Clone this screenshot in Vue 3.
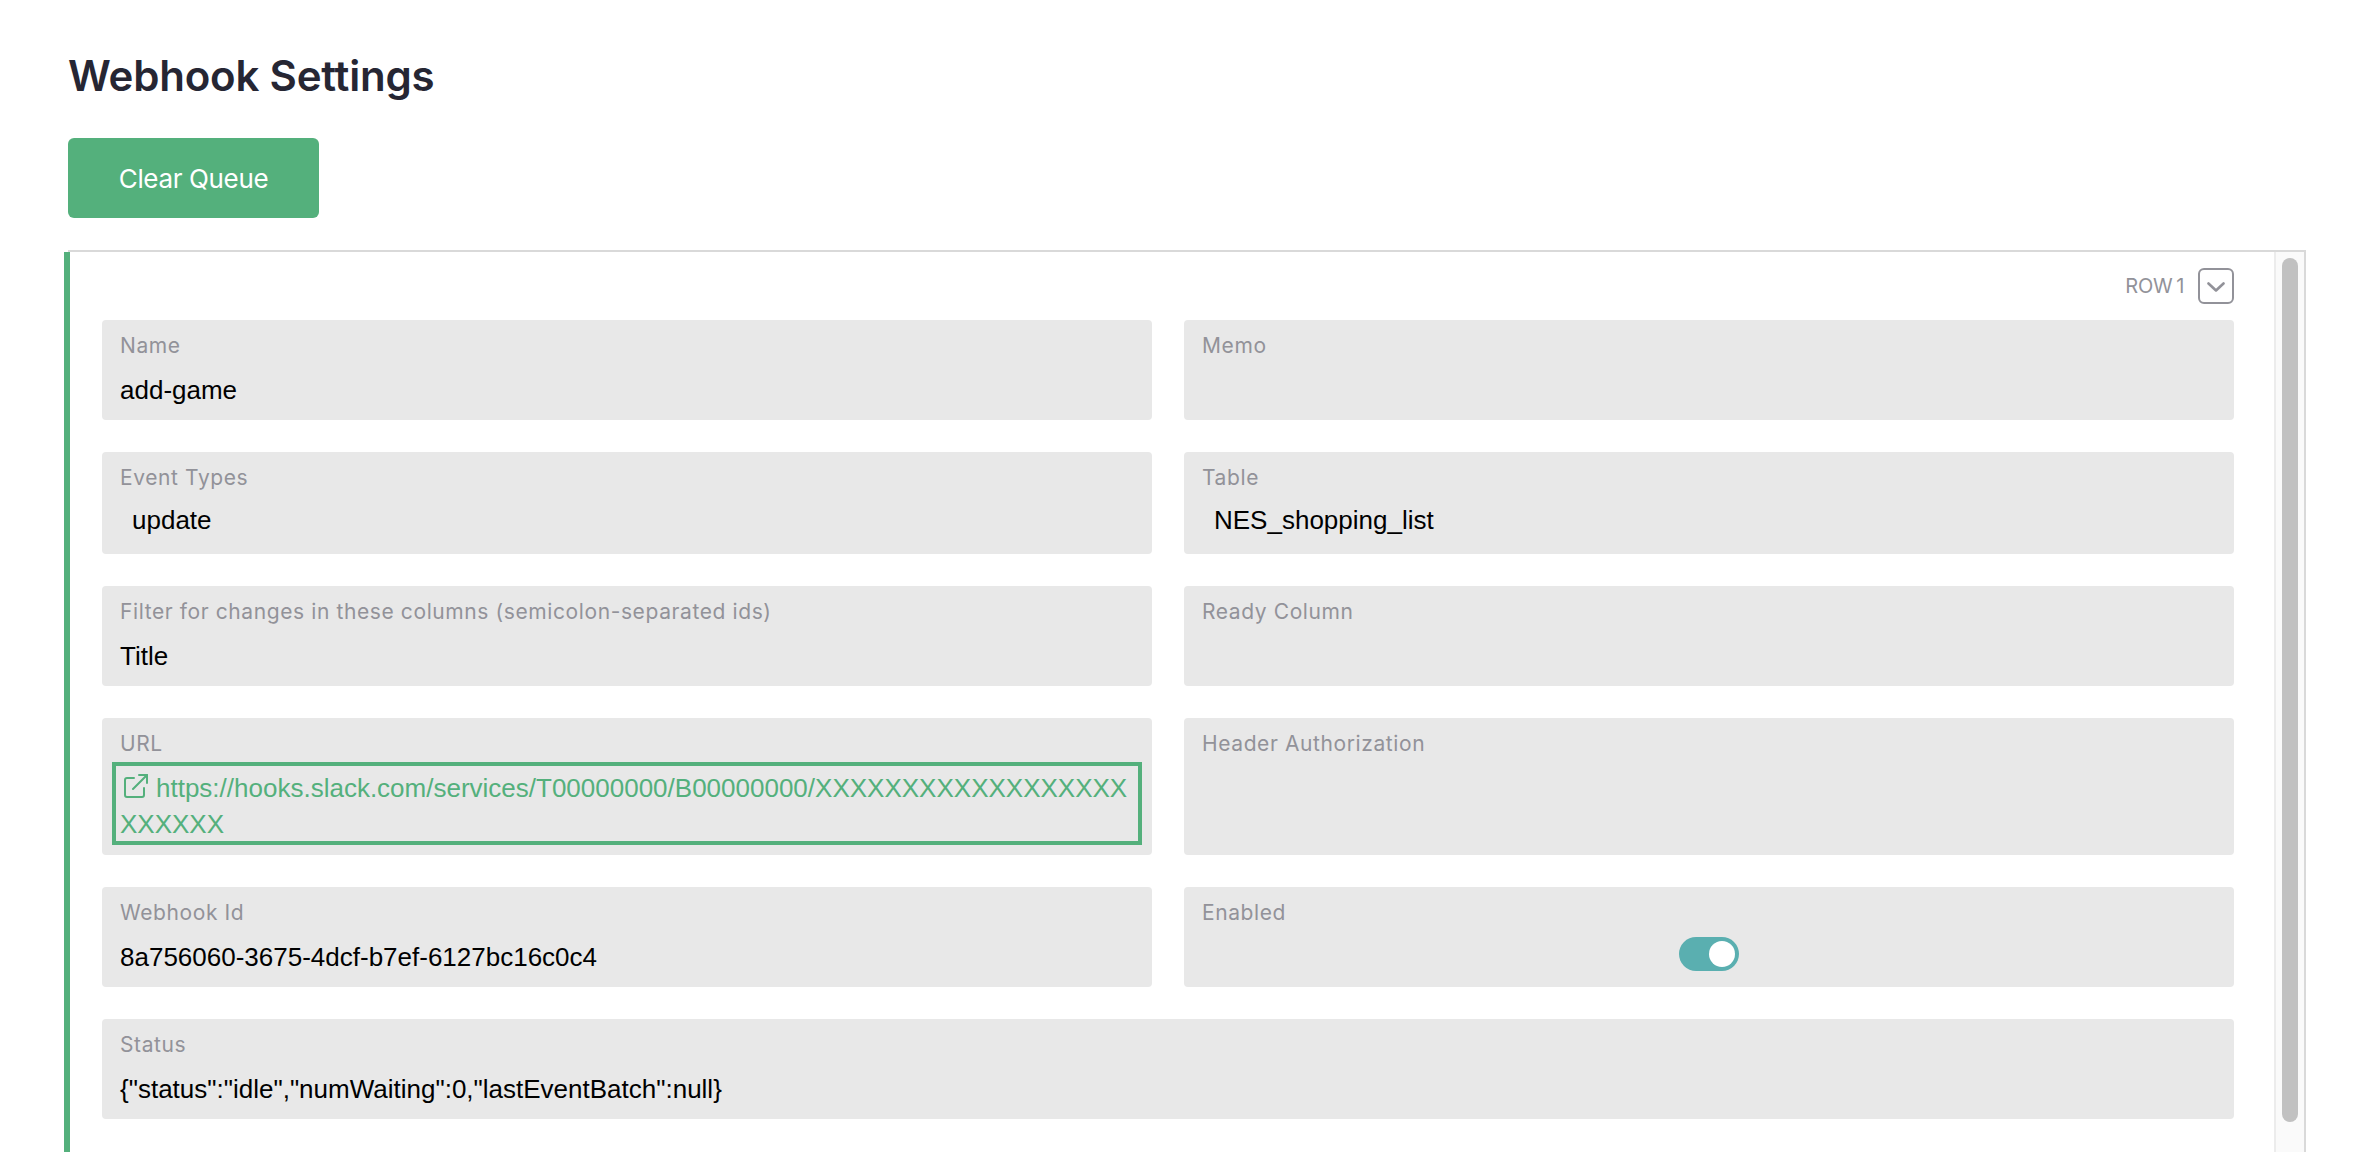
<script setup>
const rows = [
  [{ label: 'Name', value: 'add-game' }, { label: 'Memo', value: '' }],
  [{ label: 'Event Types', value: 'update', select: true }, { label: 'Table', value: 'NES_shopping_list', select: true }],
  [{ label: 'Filter for changes in these columns (semicolon-separated ids)', value: 'Title' }, { label: 'Ready Column', value: '' }],
]
</script>

<template>
  <div class="page">
    <h1 class="title">Webhook Settings</h1>
    <button class="clear">Clear Queue</button>
    <section class="card">
      <div class="body">
        <div class="content">
          <div class="rowhead">
            <span class="rowlabel">ROW 1</span>
            <span class="rowbtn">
              <svg width="20" height="12" viewBox="0 0 20 12"><path d="M2.5 3.5 10 10.5l7.5-7" fill="none" stroke="#929299" stroke-width="2.6" stroke-linecap="round" stroke-linejoin="round"/></svg>
            </span>
          </div>
          <div class="grid">
            <template v-for="(row, i) in rows" :key="i">
              <div v-for="f in row" :key="f.label" class="field" :class="{ tall: f.select }">
                <div class="label">{{ f.label }}</div>
                <div class="value" :class="{ select: f.select }">{{ f.value }}</div>
              </div>
            </template>
            <div class="field url">
              <div class="label">URL</div>
              <div class="urlbox">
                <svg class="ext" width="24" height="24" viewBox="0 0 24 24" fill="none" stroke="#54b07c" stroke-width="2" stroke-linecap="round" stroke-linejoin="round"><path d="M10 4H3a2 2 0 0 0-2 2v15a2 2 0 0 0 2 2h15a2 2 0 0 0 2-2v-7"/><path d="M9 15 23 1"/><path d="M15 1h8v8"/></svg>https://hooks.slack.com/services/T00000000/B00000000/XXXXXXXXXXXXXXXXXXXXXXXX
              </div>
            </div>
            <div class="field url">
              <div class="label">Header Authorization</div>
            </div>
            <div class="field">
              <div class="label">Webhook Id</div>
              <div class="value">8a756060-3675-4dcf-b7ef-6127bc16c0c4</div>
            </div>
            <div class="field">
              <div class="label">Enabled</div>
              <div class="toggle-wrap"><span class="toggle"><span class="knob"></span></span></div>
            </div>
            <div class="field wide">
              <div class="label">Status</div>
              <div class="value">{"status":"idle","numWaiting":0,"lastEventBatch":null}</div>
            </div>
          </div>
        </div>
        <div class="track"><div class="thumb"></div></div>
      </div>
    </section>
  </div>
</template>

<style scoped>
.page {
  width: 2362px;
  height: 1152px;
  box-sizing: border-box;
  padding: 48px 56px 0 64px;
  overflow: hidden;
  background: #fff;
  font-family: Inter, "Liberation Sans", sans-serif;
}
.title {
  margin: 0 0 0 4px;
  height: 56px;
  line-height: 56px;
  font-size: 42px;
  font-weight: 600;
  letter-spacing: -0.2px;
  color: #262633;
}
.clear {
  display: block;
  margin: 34px 0 0 4px;
  width: 251px;
  height: 80px;
  border: none;
  border-radius: 6px;
  background: #54b07c;
  color: #fff;
  font-family: inherit;
  font-size: 26px;
  letter-spacing: -0.35px;
}
.card {
  margin: 32px 0 0 4px;
  height: 902px;
  box-sizing: border-box;
  border-top: 2px solid #d9d9d9;
  border-right: 2px solid #d9d9d9;
}
.body {
  display: flex;
  height: 100%;
  margin-left: -4px;
  border-left: 6px solid #54b07c;
}
.content {
  flex: 1;
  min-width: 0;
  padding: 16px 40px 0 32px;
}
.rowhead {
  display: flex;
  justify-content: flex-end;
  align-items: center;
  gap: 14px;
  height: 36px;
}
.rowlabel {
  font-size: 20px;
  letter-spacing: -0.3px;
  word-spacing: -1.5px;
  color: #929299;
}
.rowbtn {
  display: flex;
  align-items: center;
  justify-content: center;
  width: 36px;
  height: 36px;
  box-sizing: border-box;
  border: 2px solid #929299;
  border-radius: 6px;
}
.grid {
  display: grid;
  grid-template-columns: 1050px 1050px;
  column-gap: 32px;
  row-gap: 32px;
  margin-top: 16px;
}
.field {
  height: 100px;
  box-sizing: border-box;
  padding: 13px 18px 0;
  background: #e8e8e8;
  border-radius: 4px;
}
.field.tall {
  height: 102px;
}
.field.url {
  height: 137px;
  padding: 13px 10px 0;
}
.field.url .label {
  padding-left: 8px;
}
.wide {
  grid-column: 1 / 3;
}
.label {
  height: 26px;
  line-height: 26px;
  font-size: 21px;
  letter-spacing: 0.6px;
  color: #929299;
}
.value {
  margin-top: 13px;
  height: 36px;
  line-height: 36px;
  font-family: "Liberation Sans", Arial, sans-serif;
  font-size: 26px;
  color: #000;
}
.select {
  margin-top: 11px;
  padding-left: 12px;
}
.urlbox {
  margin-top: 5px;
  height: 83px;
  box-sizing: border-box;
  border: 4px solid #54b07c;
  padding: 4px 4px 0;
  line-height: 36px;
  font-family: "Liberation Sans", Arial, sans-serif;
  font-size: 26px;
  color: #54b07c;
  word-break: break-all;
}
.ext {
  margin: 0 8px 0 4px;
  vertical-align: -1px;
}
.toggle-wrap {
  display: flex;
  justify-content: center;
  margin-top: 11px;
}
.toggle {
  display: flex;
  justify-content: flex-end;
  align-items: center;
  width: 60px;
  height: 34px;
  box-sizing: border-box;
  padding-right: 4px;
  border-radius: 17px;
  background: #5aafb0;
}
.knob {
  width: 26px;
  height: 26px;
  border-radius: 50%;
  background: #fff;
}
.track {
  flex: none;
  width: 30px;
  box-sizing: border-box;
  border-left: 2px solid #ececec;
  background: #fafafa;
  padding: 6px 6px 0;
}
.thumb {
  width: 16px;
  height: 864px;
  border-radius: 8px;
  background: #c1c1c1;
}
</style>

<style>
html, body { margin: 0; overflow: hidden; background: #fff; }
</style>
